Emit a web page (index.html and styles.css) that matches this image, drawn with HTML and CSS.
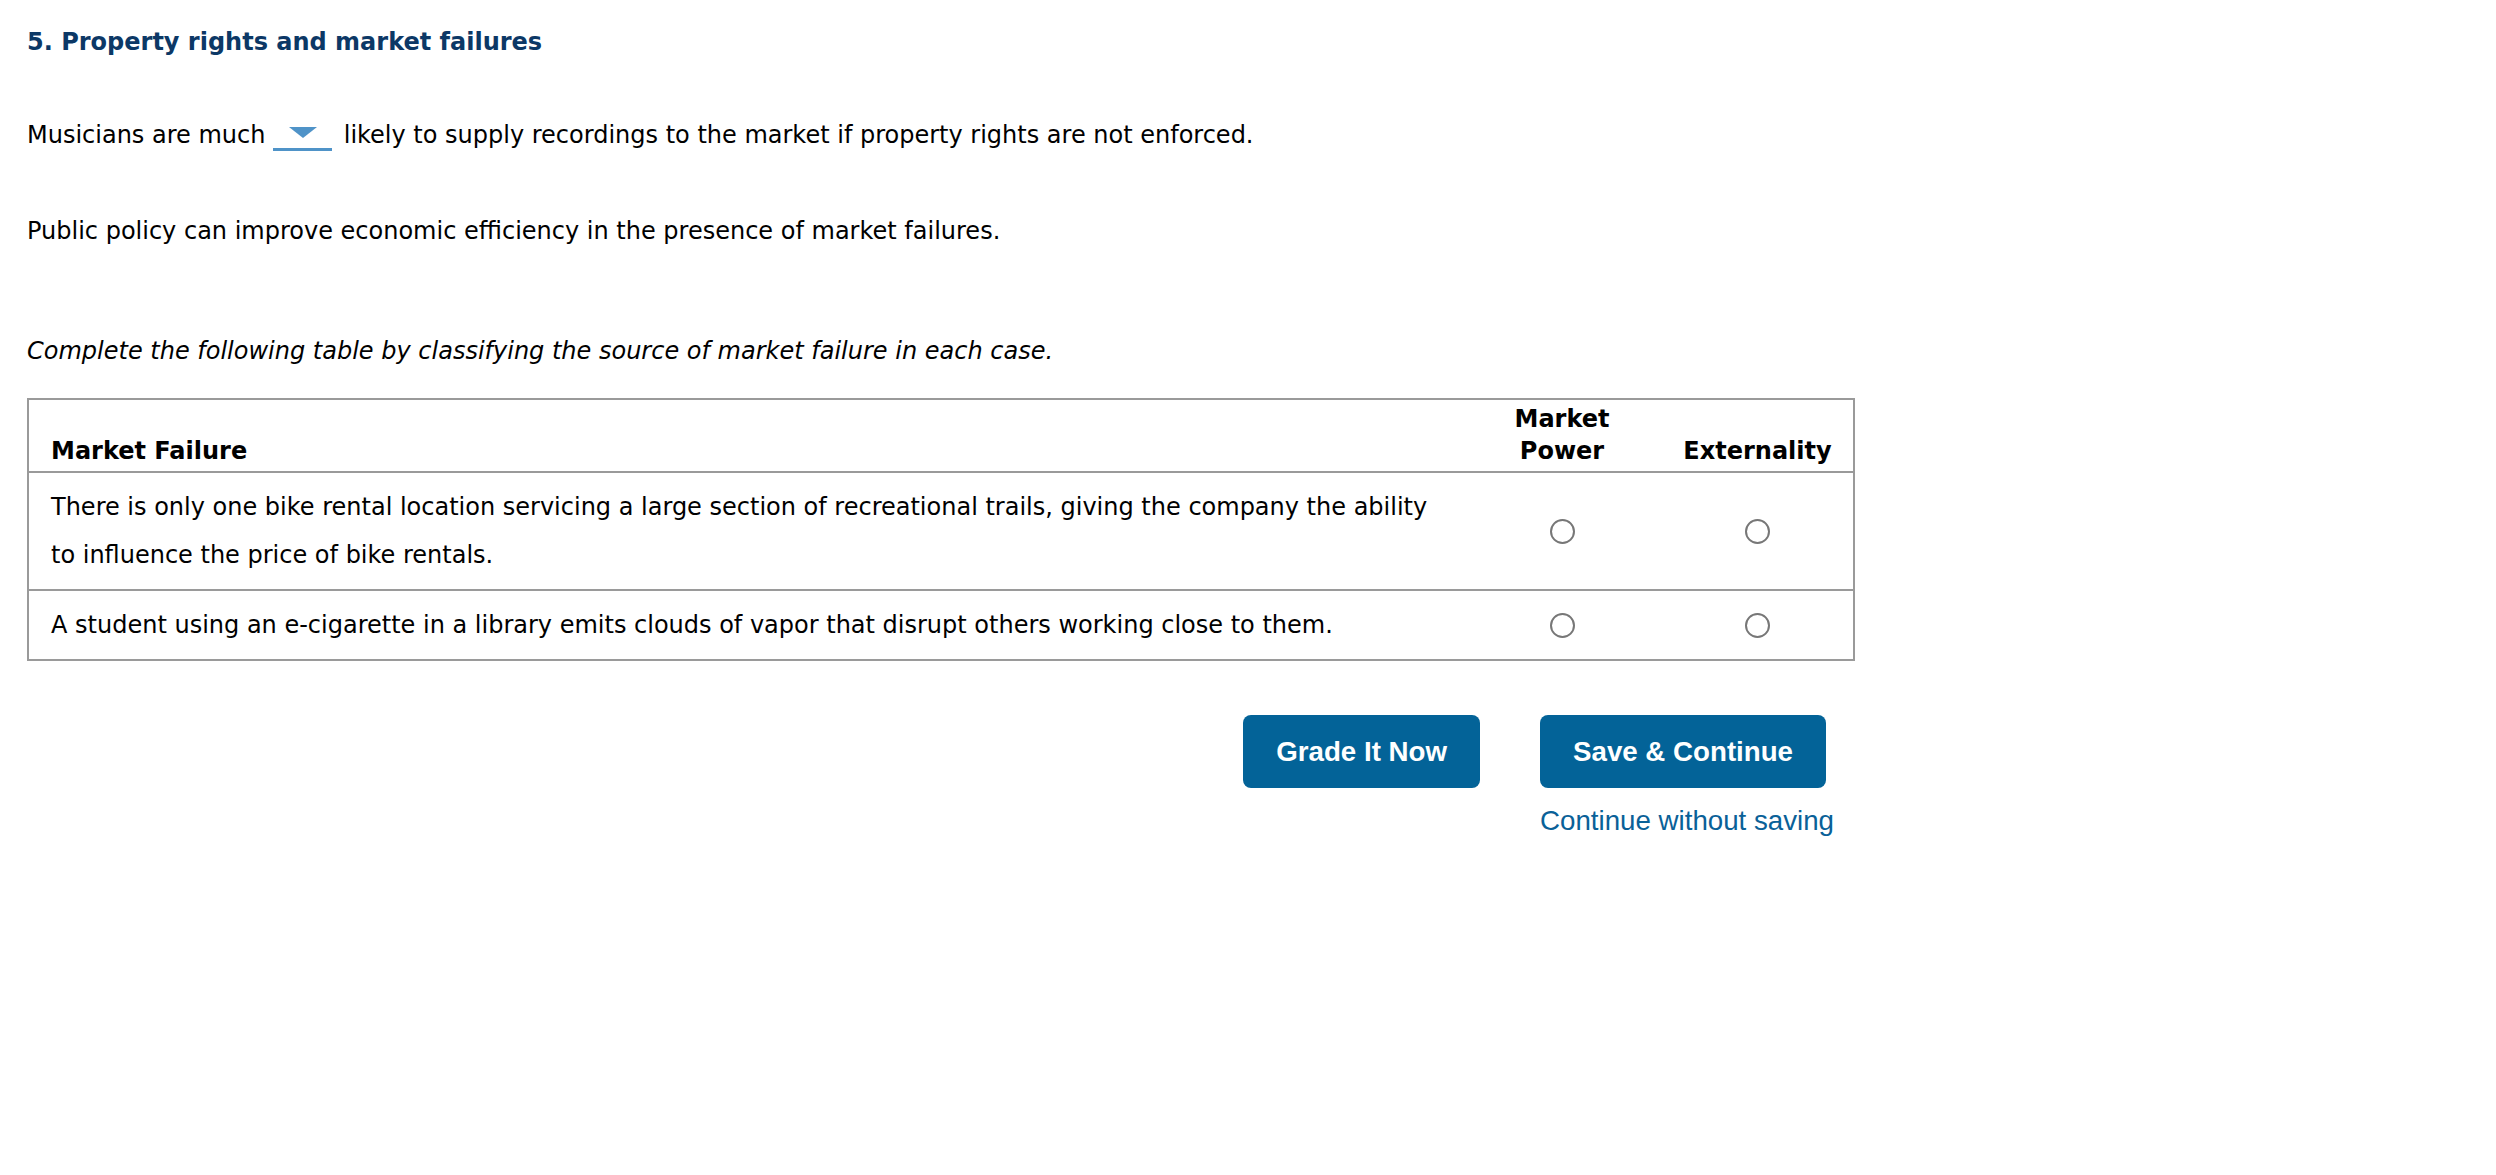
FILE: index.html
```html
<!DOCTYPE html>
<html lang="en">
<head>
<meta charset="utf-8">
<title>Property rights and market failures</title>
<link rel="stylesheet" href="styles.css">
</head>
<body>
<div class="content">
  <h1 class="title">5. Property rights and market failures</h1>
  <p class="q1">Musicians are much <span class="dropdown"><svg class="caret" width="28" height="11" viewBox="0 0 28 11"><polygon points="0,0 28,0 14,11" fill="#4f93c8"/></svg></span> likely to supply recordings to the market if property rights are not enforced.</p>
  <p class="q2">Public policy can improve economic efficiency in the presence of market failures.</p>
  <p class="q3">Complete the following table by classifying the source of market failure in each case.</p>
  <table class="grid">
    <colgroup>
      <col class="c-text">
      <col class="c-power">
      <col class="c-ext">
    </colgroup>
    <thead>
      <tr>
        <th class="col-text">Market Failure</th>
        <th class="col-opt">Market Power</th>
        <th class="col-opt col-ext">Externality</th>
      </tr>
    </thead>
    <tbody>
      <tr>
        <td class="col-text">There is only one bike rental location servicing a large section of recreational trails, giving the company the ability to influence the price of bike rentals.</td>
        <td class="col-opt"><input type="radio" name="r1" class="radio"></td>
        <td class="col-opt"><input type="radio" name="r1" class="radio"></td>
      </tr>
      <tr>
        <td class="col-text">A student using an e-cigarette in a library emits clouds of vapor that disrupt others working close to them.</td>
        <td class="col-opt"><input type="radio" name="r2" class="radio"></td>
        <td class="col-opt"><input type="radio" name="r2" class="radio"></td>
      </tr>
    </tbody>
  </table>
  <div class="actions">
    <button class="btn" type="button">Grade It Now</button>
    <div class="save-col">
      <button class="btn" type="button">Save &amp; Continue</button>
      <a class="skip" href="#">Continue without saving</a>
    </div>
  </div>
</div>
</body>
</html>
```

FILE: styles.css
```css
html, body {
  margin: 0;
  padding: 0;
  background: #ffffff;
}

body {
  padding: 27px;
  font-family: "DejaVu Sans", Verdana, sans-serif;
  font-size: 24px;
  color: #000000;
}

.content {
  width: 1828px;
}

.title {
  margin: 1px 0 0 0;
  font-size: 24px;
  line-height: 28px;
  font-weight: bold;
  color: #0c3866;
}

.q1, .q2, .q3 {
  margin: 0;
  line-height: 28px;
}

.q1 {
  margin-top: 65px;
}

.q2 {
  margin-top: 66px;
}

.q3 {
  margin-top: 92px;
  font-style: italic;
}

.dropdown {
  display: inline-block;
  box-sizing: border-box;
  width: 59px;
  height: 30px;
  padding-top: 6px;
  margin-right: 4px;
  border-bottom: 3px solid #4f93c8;
  vertical-align: top;
}

.caret {
  display: block;
  margin: 0 auto;
}

.grid {
  margin-top: 33px;
  width: 1828px;
  table-layout: fixed;
  border-collapse: collapse;
  border: 2px solid #9a9a9a;
}

.c-power {
  width: 200px;
}

.c-ext {
  width: 192px;
}

.grid th {
  font-weight: bold;
  line-height: 31.5px;
  padding: 4px 22px;
  vertical-align: bottom;
  border-bottom: 2px solid #9a9a9a;
}

.grid th.col-ext {
  padding-left: 18px;
  padding-right: 18px;
}

.grid td {
  line-height: 48px;
  padding: 10px 22px;
  vertical-align: middle;
  border-top: 2px solid #9a9a9a;
}

.col-text {
  text-align: left;
}

.col-opt {
  text-align: center;
}

.radio {
  appearance: none;
  -webkit-appearance: none;
  display: block;
  width: 25px;
  height: 25px;
  margin: 0 auto;
  box-sizing: border-box;
  border: 2px solid #777777;
  border-radius: 50%;
  background: #ffffff;
}

.actions {
  margin-top: 54px;
  display: flex;
  justify-content: flex-end;
  align-items: flex-start;
  gap: 60px;
  padding-right: 21px;
}

.save-col {
  display: flex;
  flex-direction: column;
  align-items: flex-start;
}

.btn {
  box-sizing: border-box;
  height: 73px;
  padding: 0 33px;
  border: none;
  border-radius: 8px;
  background: #036398;
  color: #ffffff;
  font-family: "Liberation Sans", Arial, sans-serif;
  font-weight: bold;
  font-size: 27.7px;
  display: flex;
  align-items: center;
  justify-content: center;
}

.skip {
  margin-top: 17px;
  font-family: "Liberation Sans", Arial, sans-serif;
  font-size: 27.7px;
  color: #0a6198;
  text-decoration: none;
}
```
